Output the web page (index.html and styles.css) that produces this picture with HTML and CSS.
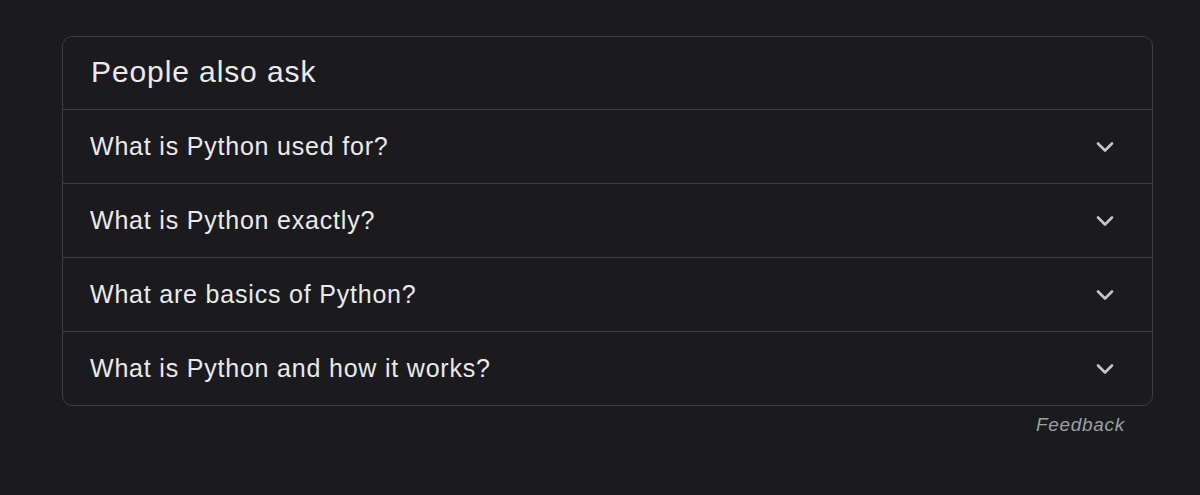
FILE: index.html
```html
<!DOCTYPE html>
<html>
<head>
<meta charset="utf-8">
<link rel="stylesheet" href="styles.css">
</head>
<body>
<div class="page">
  <div class="card">
    <div class="head">People also ask</div>
    <div class="row"><span class="q">What is Python used for?</span><svg class="chev" viewBox="0 0 18 12"><path d="M2 2.5 9 9.5 16 2.5"/></svg></div>
    <div class="row"><span class="q">What is Python exactly?</span><svg class="chev" viewBox="0 0 18 12"><path d="M2 2.5 9 9.5 16 2.5"/></svg></div>
    <div class="row"><span class="q">What are basics of Python?</span><svg class="chev" viewBox="0 0 18 12"><path d="M2 2.5 9 9.5 16 2.5"/></svg></div>
    <div class="row"><span class="q">What is Python and how it works?</span><svg class="chev" viewBox="0 0 18 12"><path d="M2 2.5 9 9.5 16 2.5"/></svg></div>
  </div>
  <div class="feedback">Feedback</div>
</div>
</body>
</html>
```
FILE: styles.css
```css
html, body {
  margin: 0;
  padding: 0;
  background: #1b1b1d;
  height: 100%;
  overflow: hidden;
}
.page {
  padding: 36px 0 0 62px;
  width: 1091px;
  font-family: "Liberation Sans", Arial, sans-serif;
}
.card {
  border: 1px solid #3d3e41;
  border-radius: 10px;
  background: #1b1b1d;
}
.head {
  height: 73px;
  box-sizing: border-box;
  padding: 18px 0 0 28px;
  font-size: 30px;
  letter-spacing: 0.9px;
  color: #e8eaed;
  border-bottom: 1px solid #3d3e41;
}
.row {
  height: 73px;
  display: flex;
  align-items: center;
  justify-content: space-between;
  padding: 0 38px 0 27px;
  border-bottom: 1px solid #3d3e41;
}
.row:last-child {
  border-bottom: none;
}
.q {
  font-size: 25px;
  letter-spacing: 0.8px;
  color: #e8eaed;
}
.chev {
  width: 18px;
  height: 12px;
  fill: none;
  stroke: #c4c6c9;
  stroke-width: 2.6;
  stroke-linecap: round;
  stroke-linejoin: round;
}
.feedback {
  text-align: right;
  padding: 8px 28px 0 0;
  font-size: 19px;
  letter-spacing: 0.7px;
  font-style: italic;
  color: #9aa0a6;
}
```
